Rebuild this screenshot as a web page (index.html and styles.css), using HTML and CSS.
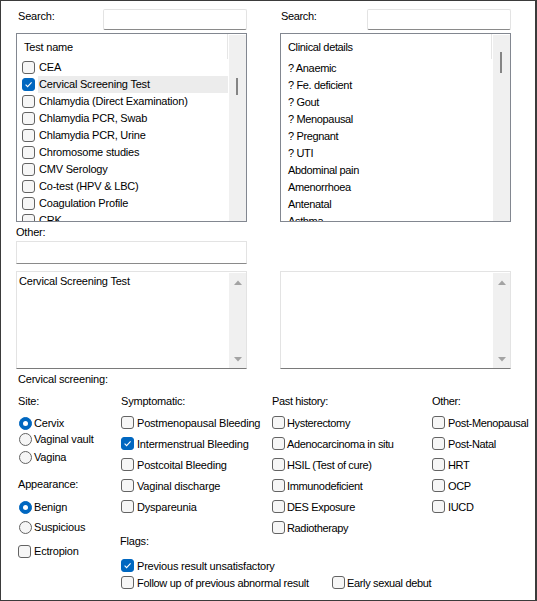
FILE: index.html
```
<!DOCTYPE html>
<html>
<head>
<meta charset="utf-8">
<link rel="stylesheet" href="styles.css">
</head>
<body>
<div class="window">
  <div class="top">
    <div class="search-row"><span class="lbl l2">Search:</span><div class="input search"></div></div>
    <div class="search-row"><span class="lbl l1 ms">Search:</span><div class="input search"></div></div>

    <div class="list">
      <div class="list-body">
        <div class="list-head">Test name</div>
        <div class="item"><span class="cb"></span><span class="txt">CEA</span></div>
        <div class="item sel"><span class="cb on"><svg width="11" height="11" viewBox="0 0 11 11"><path d="M2.6 5.6 L4.6 7.6 L8.6 3.4" fill="none" stroke="#fff" stroke-width="1.1"/></svg></span><span class="txt">Cervical Screening Test</span></div>
        <div class="item"><span class="cb"></span><span class="txt">Chlamydia (Direct Examination)</span></div>
        <div class="item"><span class="cb"></span><span class="txt">Chlamydia PCR, Swab</span></div>
        <div class="item"><span class="cb"></span><span class="txt">Chlamydia PCR, Urine</span></div>
        <div class="item"><span class="cb"></span><span class="txt">Chromosome studies</span></div>
        <div class="item"><span class="cb"></span><span class="txt">CMV Serology</span></div>
        <div class="item"><span class="cb"></span><span class="txt">Co-test (HPV &amp; LBC)</span></div>
        <div class="item"><span class="cb"></span><span class="txt">Coagulation Profile</span></div>
        <div class="item"><span class="cb"></span><span class="txt">CRK</span></div>
      </div>
      <div class="vscroll"><div class="thumb t-left"></div></div>
    </div>
    <div class="list">
      <div class="list-body ms">
        <div class="list-head">Clinical details</div>
        <div class="item plain">? Anaemic</div>
        <div class="item plain">? Fe. deficient</div>
        <div class="item plain">? Gout</div>
        <div class="item plain">? Menopausal</div>
        <div class="item plain">? Pregnant</div>
        <div class="item plain">? UTI</div>
        <div class="item plain">Abdominal pain</div>
        <div class="item plain">Amenorrhoea</div>
        <div class="item plain">Antenatal</div>
        <div class="item plain">Asthma</div>
      </div>
      <div class="vscroll"><div class="thumb t-right"></div></div>
    </div>

    <div class="other-block">
      <div class="lbl other-lbl">Other:</div>
      <div class="input other"></div>
    </div>
    <div></div>

    <div class="memo">
      <div class="memo-text">Cervical Screening Test</div>
      <div class="vscroll arrows">
        <svg width="8" height="5" viewBox="0 0 8 5"><path d="M0 5 L4 0.5 L8 5 Z" fill="#a3a3a3"/></svg>
        <svg width="8" height="5" viewBox="0 0 8 5"><path d="M0 0 L8 0 L4 4.5 Z" fill="#a3a3a3"/></svg>
      </div>
    </div>
    <div class="memo">
      <div class="memo-text"></div>
      <div class="vscroll arrows">
        <svg width="8" height="5" viewBox="0 0 8 5"><path d="M0 5 L4 0.5 L8 5 Z" fill="#a3a3a3"/></svg>
        <svg width="8" height="5" viewBox="0 0 8 5"><path d="M0 0 L8 0 L4 4.5 Z" fill="#a3a3a3"/></svg>
      </div>
    </div>
  </div>

  <div class="lbl cs-label">Cervical screening:</div>

  <div class="bottom">
    <div class="col c1">
      <div class="hdr">Site:</div>
      <div class="rrow m7"><span class="rd on"></span><span class="rt">Cervix</span></div>
      <div class="rrow"><span class="rd"></span><span class="rt">Vaginal vault</span></div>
      <div class="rrow m2"><span class="rd"></span><span class="rt">Vagina</span></div>
      <div class="hdr m12">Appearance:</div>
      <div class="rrow m8"><span class="rd on"></span><span class="rt">Benign</span></div>
      <div class="rrow m4"><span class="rd"></span><span class="rt">Suspicious</span></div>
      <div class="rrow m8 ecto"><span class="cb"></span><span class="rt">Ectropion</span></div>
    </div>
    <div class="col c2">
      <div class="hdr">Symptomatic:</div>
      <div class="crow m4"><span class="cb"></span><span class="ct">Postmenopausal Bleeding</span></div>
      <div class="crow"><span class="cb on"><svg width="11" height="11" viewBox="0 0 11 11"><path d="M2.6 5.6 L4.6 7.6 L8.6 3.4" fill="none" stroke="#fff" stroke-width="1.1"/></svg></span><span class="ct">Intermenstrual Bleeding</span></div>
      <div class="crow"><span class="cb"></span><span class="ct">Postcoital Bleeding</span></div>
      <div class="crow"><span class="cb"></span><span class="ct">Vaginal discharge</span></div>
      <div class="crow"><span class="cb"></span><span class="ct">Dyspareunia</span></div>
      <div class="hdr flags">Flags:</div>
      <div class="frow m9"><span class="cb on"><svg width="11" height="11" viewBox="0 0 11 11"><path d="M2.6 5.6 L4.6 7.6 L8.6 3.4" fill="none" stroke="#fff" stroke-width="1.1"/></svg></span><span class="ct">Previous result unsatisfactory</span></div>
      <div class="frow">
        <div class="fitem first"><span class="cb"></span><span class="ct">Follow up of previous abnormal result</span></div>
        <div class="fitem ms"><span class="cb"></span><span class="ct">Early sexual debut</span></div>
      </div>
    </div>
    <div class="col c3 ms">
      <div class="hdr">Past history:</div>
      <div class="crow m4"><span class="cb"></span><span class="ct">Hysterectomy</span></div>
      <div class="crow"><span class="cb"></span><span class="ct">Adenocarcinoma in situ</span></div>
      <div class="crow"><span class="cb"></span><span class="ct">HSIL (Test of cure)</span></div>
      <div class="crow"><span class="cb"></span><span class="ct">Immunodeficient</span></div>
      <div class="crow"><span class="cb"></span><span class="ct">DES Exposure</span></div>
      <div class="crow"><span class="cb"></span><span class="ct">Radiotherapy</span></div>
    </div>
    <div class="col c4 ms">
      <div class="hdr">Other:</div>
      <div class="crow m4"><span class="cb"></span><span class="ct">Post-Menopausal</span></div>
      <div class="crow"><span class="cb"></span><span class="ct">Post-Natal</span></div>
      <div class="crow"><span class="cb"></span><span class="ct">HRT</span></div>
      <div class="crow"><span class="cb"></span><span class="ct">OCP</span></div>
      <div class="crow"><span class="cb"></span><span class="ct">IUCD</span></div>
    </div>
  </div>
</div>
</body>
</html>
```
FILE: styles.css
```
* { box-sizing: border-box; }
body { margin: 0; background: #fff; }

.window {
  width: 537px;
  height: 601px;
  border: 1px solid #3b3b3b;
  border-right-width: 2px;
  background: #fff;
  color: #000;
  font-family: "Liberation Sans", Arial, sans-serif;
  font-size: 11px;
  letter-spacing: -0.2px;
  overflow: hidden;
}
.ms { letter-spacing: -0.35px; }

.top {
  display: grid;
  grid-template-columns: 231px 231px;
  column-gap: 33px;
  padding: 8px 0 0 15px;
}

.lbl { line-height: 14px; white-space: nowrap; }
.l2 { padding-left: 2px; }
.l1 { padding-left: 1px; }

.search-row {
  display: flex;
  justify-content: space-between;
  align-items: flex-start;
  height: 21px;
}
.input {
  background: #fff;
  border: 1px solid #e3e3e3;
  border-bottom-color: #8a8a8a;
  border-radius: 2px;
}
.search { width: 144px; height: 21px; }

.list {
  margin-top: 3px;
  height: 189px;
  border: 1px solid #828790;
  display: flex;
  background: #fff;
}
.list-body { flex: 1; overflow: hidden; white-space: nowrap; }
.list-head {
  width: 211px;
  height: 25px;
  line-height: 26px;
  padding-left: 7px;
  border-right: 1px solid #e6e6e6;
}
.item {
  display: flex;
  align-items: center;
  height: 17px;
  padding-left: 5px;
}
.item.plain { padding-left: 7px; line-height: 18px; }
.item .txt {
  margin-left: 3px;
  padding-left: 1px;
  line-height: 17px;
}
.item.sel .txt { background: #ececec; width: 190px; }

.vscroll {
  width: 17px;
  flex: none;
  background: #f0f0f0;
  margin-top: 1px;
}
.thumb { width: 2px; background: #858585; margin-left: 7px; }
.t-left { height: 17px; margin-top: 43px; }
.t-right { height: 21px; margin-top: 17px; }

.other-lbl { margin-top: 3px; height: 14px; }
.other { margin-top: 2px; height: 23px; width: 231px; border-radius: 0; }

.memo {
  margin-top: 7px;
  height: 98px;
  display: flex;
  border: 1px solid #e3e3e3;
  border-bottom-color: #7a7a7a;
}
.memo-text { flex: 1; padding: 2px 0 0 2px; line-height: 14px; }
.arrows {
  height: 95px;
  display: flex;
  flex-direction: column;
  justify-content: space-between;
  align-items: center;
  padding: 7px 0 6px;
}
.arrows svg { display: block; }

.cs-label { margin-top: 3px; padding-left: 17px; height: 14px; }

.bottom { display: flex; padding-left: 17px; white-space: nowrap; }
.col { flex: none; }
.c1 { width: 103px; }
.c2 { width: 151px; }
.c3 { width: 160px; }
.c4 { width: 100px; }

.hdr { margin-top: 8px; line-height: 14px; height: 14px; }
.m2 { margin-top: 2px; }
.m4 { margin-top: 4px; }
.m7 { margin-top: 7px; }
.m8 { margin-top: 8px; }
.m9 { margin-top: 9px; }
.m12 { margin-top: 12px; }

.rrow { display: flex; align-items: center; height: 16px; padding-left: 1px; }
.rrow .rt { margin-left: 2px; }
.rrow.ecto { padding-left: 0; }
.rrow.ecto .rt { margin-left: 3px; }

.crow { display: flex; align-items: center; height: 21px; }
.ct { margin-left: 3px; }
.c3 .ct { margin-left: 2px; }

.flags { margin-top: 17px; margin-left: -1px; }
.frow { display: flex; align-items: center; height: 17px; }
.fitem { display: flex; align-items: center; flex: none; }
.fitem.first { width: 211px; letter-spacing: -0.3px; }
.fitem.ms .ct { margin-left: 2px; }

.cb {
  width: 13px;
  height: 13px;
  flex: none;
  border: 1px solid #636363;
  border-radius: 3px;
  background: #f6f6f6;
  display: flex;
  align-items: center;
  justify-content: center;
}
.cb.on { background: #0067c0; border-color: #0067c0; }
.cb svg { display: block; }

.rd {
  width: 13px;
  height: 13px;
  flex: none;
  border: 1px solid #636363;
  border-radius: 50%;
  background: #f6f6f6;
  display: flex;
  align-items: center;
  justify-content: center;
}
.rd.on { background: #0067c0; border-color: #0067c0; }
.rd.on::after {
  content: "";
  width: 5px;
  height: 5px;
  border-radius: 50%;
  background: #fff;
}
```
